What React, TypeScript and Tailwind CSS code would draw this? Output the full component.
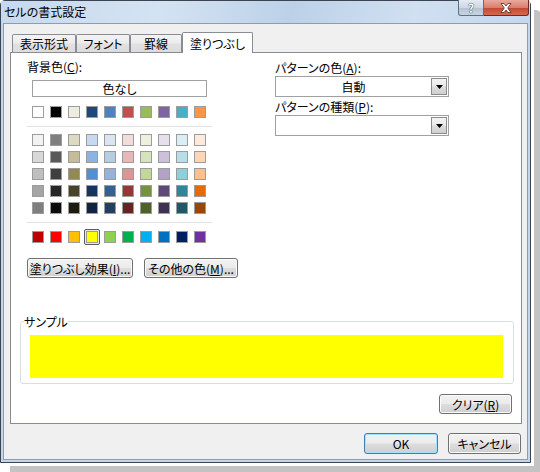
import type { ReactNode } from "react";

const themeColors = [
  "#ffffff", "#000000", "#eeece1", "#1f497d", "#4f81bd",
  "#c0504d", "#9bbb59", "#8064a2", "#4bacc6", "#f79646",
];

const tintRows = [
  ["#f2f2f2", "#7f7f7f", "#ddd9c3", "#c6d9f0", "#dbe5f1", "#f2dcdb", "#ebf1dd", "#e5e0ec", "#dbeef3", "#fdeada"],
  ["#d8d8d8", "#595959", "#c4bd97", "#8db3e2", "#b8cce4", "#e5b9b7", "#d7e3bc", "#ccc1d9", "#b7dde8", "#fbd5b5"],
  ["#bfbfbf", "#3f3f3f", "#938953", "#548dd4", "#95b3d7", "#d99694", "#c3d69b", "#b2a2c7", "#92cddc", "#fac08f"],
  ["#a5a5a5", "#262626", "#494429", "#17365d", "#366092", "#953734", "#76923c", "#5f497a", "#31859b", "#e36c09"],
  ["#7f7f7f", "#0c0c0c", "#1d1b10", "#0f243e", "#244061", "#632423", "#4f6128", "#3f3151", "#205867", "#974806"],
];

const standardColors = [
  "#c00000", "#ff0000", "#ffc000", "#ffff00", "#92d050",
  "#00b050", "#00b0f0", "#0070c0", "#002060", "#7030a0",
];

const tabs = [
  { label: "表示形式", width: "w-[64px]" },
  { label: "フォント", width: "w-[54px]" },
  { label: "罫線", width: "w-[52px]" },
];

const buttonBase =
  "flex items-center justify-center rounded-[3px] border bg-[linear-gradient(#f2f2f2_0%,#ebebeb_48%,#dddddd_52%,#cfcfcf_100%)] text-[12px] leading-[13px]";

function Swatch({ color }: { color: string }) {
  return <div className="h-[12px] w-[12px] border border-[#9c9c9c]" style={{ backgroundColor: color }} />;
}

function Key({ children }: { children: ReactNode }) {
  return <span className="underline underline-offset-[1px]">{children}</span>;
}

function Button({ children, className }: { children: ReactNode; className: string }) {
  return (
    <div className={`${buttonBase} border-[#707070] shadow-[inset_0_0_0_1px_#fbfbfb] ${className}`}>
      {children}
    </div>
  );
}

function Combo({ value }: { value?: string }) {
  return (
    <div className="flex h-[21px] w-[174px] items-stretch border border-[#a0a0a0] bg-white">
      <div className="flex flex-1 items-center justify-center">{value}</div>
      <div className="my-[1px] mr-[1px] flex w-[16px] items-center justify-center border border-[#8c8c8c] bg-[linear-gradient(#f4f4f4_0%,#e9e9e9_48%,#dcdcdc_52%,#d0d0d0_100%)]">
        <svg width="7" height="4" viewBox="0 0 7 4">
          <path d="M0 0h7L3.5 4z" fill="#000" />
        </svg>
      </div>
    </div>
  );
}

export default function App() {
  return (
    <div className="h-[472px] w-[540px] overflow-hidden bg-white font-['Noto_Sans_CJK_JP','Noto_Sans_CJK_SC',sans-serif] text-[12px] leading-[13px] text-black [font-feature-settings:'palt']">
      <div className="flex h-[463px] w-[531px] flex-col rounded-t-[5px] border border-[#3b4450] bg-[#c3d6eb] shadow-[3px_3px_0_#ffffff,10px_10px_0_#c3c3c3]">
        {/* title bar */}
        <div className="flex h-[22px] bg-[linear-gradient(100deg,#c6d9ee_0%,#d4e3f2_30%,#bcd1e8_55%,#d0e0f1_78%,#c4d7ec_100%)]">
          <div className="pl-[3px] pt-[4px] text-[12px]">セルの書式設定</div>
          <div className="-mt-px ml-auto mr-px flex self-start">
            <div className="flex h-[16px] w-[26px] items-center justify-center rounded-bl-[3px] border border-t-0 border-[#5f6f82] bg-[linear-gradient(#e4ebf3_0%,#cdd8e4_50%,#b4c2d3_51%,#c7d3e1_100%)] text-[12px] font-bold leading-[12px] text-white [text-shadow:0_0_1px_#333,0_0_1px_#333]">
              ?
            </div>
            <div className="flex h-[16px] w-[45px] items-center justify-center rounded-br-[3px] border border-l-0 border-t-0 border-[#6b2a22] bg-[linear-gradient(#e9a99c_0%,#d7806f_50%,#c4452f_51%,#d46a50_100%)]">
              <svg width="12" height="10" viewBox="0 0 12 10">
                <path
                  d="M1 0.5h3l2 2.5 2-2.5h3l-3.3 4.5 3.3 4.5h-3l-2-2.5-2 2.5h-3l3.3-4.5z"
                  fill="#ffffff"
                  stroke="#5a2a24"
                  strokeWidth="0.8"
                />
              </svg>
            </div>
          </div>
        </div>

        {/* client area */}
        <div className="mx-[2px] mb-[2px] flex flex-1 flex-col border border-[#8e9cae] bg-[#f0f0f0] pl-[6px] pr-[5px] pt-[8px]">
          {/* tabs */}
          <div className="flex h-[20px] items-end pl-[2px]">
            {tabs.map((tab) => (
              <div
                key={tab.label}
                className={`flex h-[18px] ${tab.width} items-center justify-center rounded-t-[2px] border border-b-0 border-[#898c95] bg-[linear-gradient(#f3f3f3_0%,#ececec_48%,#e1e1e1_52%,#dcdcdc_100%)]`}
              >
                {tab.label}
              </div>
            ))}
            <div className="relative z-10 -mb-px flex h-[21px] w-[71px] items-center justify-center rounded-t-[2px] border border-b-0 border-[#898c95] bg-white">
              塗りつぶし
            </div>
          </div>

          {/* panel */}
          <div className="flex h-[372px] flex-col border border-[#898c95] bg-white">
            <div className="flex pl-[16px]">
              {/* background color */}
              <div className="flex w-[248px] flex-col pt-[7px]">
                <div>
                  背景色(<Key>C</Key>):
                </div>
                <div className="ml-[5px] mt-[7px] flex h-[17px] w-[175px] items-center justify-center border border-[#a0a0a0] bg-white">
                  色なし
                </div>
                <div className="ml-[5px] mt-[9px] flex gap-[6px]">
                  {themeColors.map((c) => (
                    <Swatch key={c} color={c} />
                  ))}
                </div>
                <div className="mt-[8px] h-px w-[185px] bg-[#e2e2e2]" />
                <div className="ml-[5px] mt-[7px] flex flex-col gap-[5px]">
                  {tintRows.map((row, i) => (
                    <div key={i} className="flex gap-[6px]">
                      {row.map((c) => (
                        <Swatch key={c} color={c} />
                      ))}
                    </div>
                  ))}
                </div>
                <div className="mt-[8px] h-px w-[185px] bg-[#e2e2e2]" />
                <div className="ml-[5px] mt-[8px] flex h-[12px] items-center gap-[6px]">
                  {standardColors.map((c) =>
                    c === "#ffff00" ? (
                      <div
                        key={c}
                        className="-mx-[2px] flex h-[16px] w-[16px] items-center justify-center rounded-[2px] border border-[#5c5c5c] bg-[#e8e8e8]"
                      >
                        <Swatch color={c} />
                      </div>
                    ) : (
                      <Swatch key={c} color={c} />
                    )
                  )}
                </div>
                <div className="mt-[15px] flex gap-[11px]">
                  <Button className="h-[20px] w-[106px]">
                    塗りつぶし効果(<Key>I</Key>)...
                  </Button>
                  <Button className="h-[20px] w-[94px]">
                    その他の色(<Key>M</Key>)...
                  </Button>
                </div>
              </div>

              {/* pattern */}
              <div className="flex flex-col pt-[8px]">
                <div>
                  パターンの色(<Key>A</Key>):
                </div>
                <div className="mt-[2px]">
                  <Combo value="自動" />
                </div>
                <div className="mt-[3px]">
                  パターンの種類(<Key>P</Key>):
                </div>
                <div className="mt-[2px]">
                  <Combo />
                </div>
              </div>
            </div>

            {/* sample */}
            <fieldset className="ml-[9px] mt-[37px] w-[494px] rounded-[3px] border border-[#d5dfe5] px-[3px] pb-[5px]">
              <legend className="px-0 leading-[13px]">サンプル</legend>
              <div className="ml-[6px] mt-[7px] h-[43px] w-[473px] bg-[#ffff00]" />
            </fieldset>

            <div className="mr-[9px] mt-[10px] flex justify-end">
              <Button className="h-[20px] w-[73px]">
                クリア(<Key>R</Key>)
              </Button>
            </div>
          </div>

          {/* dialog buttons */}
          <div className="mr-px mt-[9px] flex justify-end gap-[10px]">
            <div
              className={`${buttonBase} h-[21px] w-[74px] border-[#3c7fb1] shadow-[inset_0_0_0_1px_#9fe3fd]`}
            >
              OK
            </div>
            <Button className="h-[21px] w-[73px]">キャンセル</Button>
          </div>
        </div>
      </div>
    </div>
  );
}
